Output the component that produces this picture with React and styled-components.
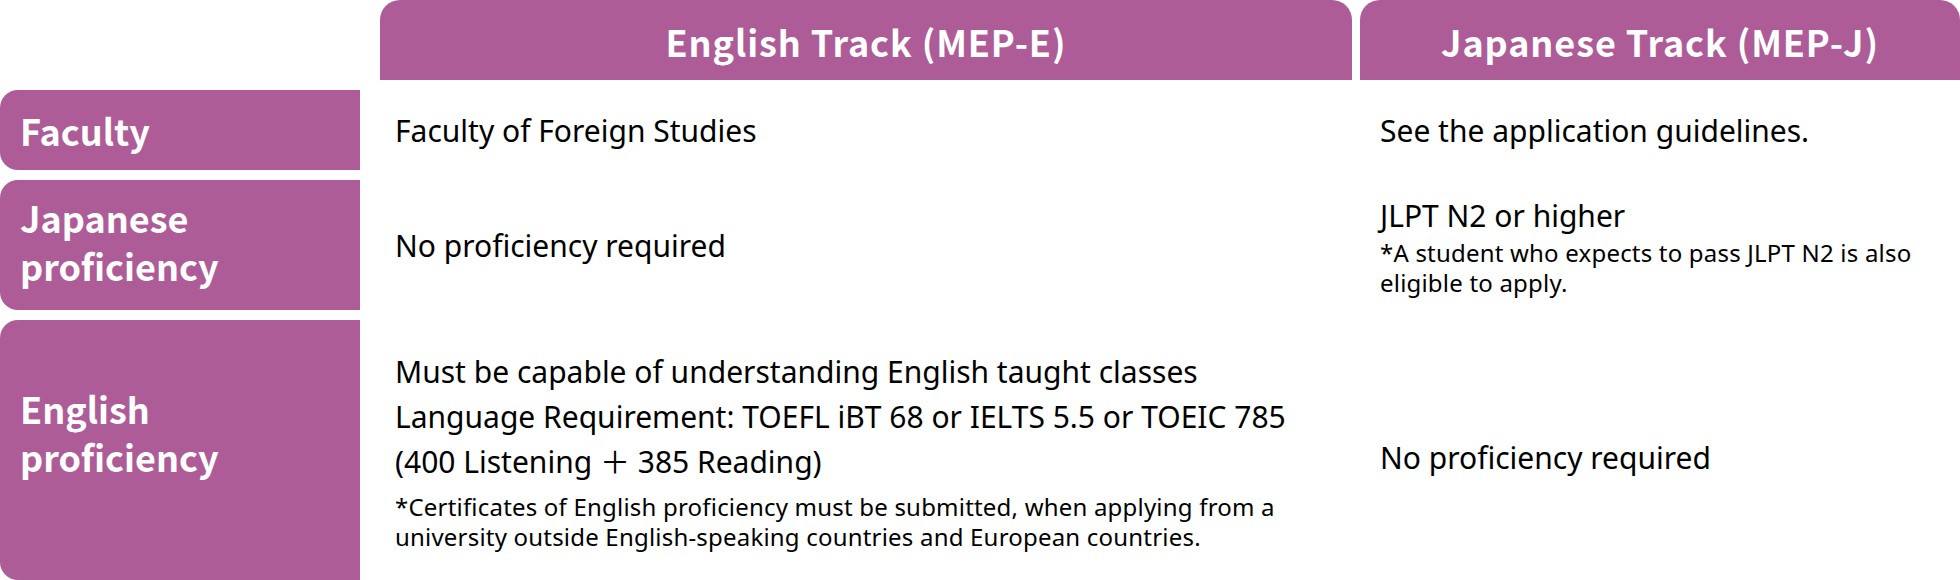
import React from "react";
import styled, { createGlobalStyle } from "styled-components";

const GlobalStyle = createGlobalStyle`
  html, body {
    margin: 0;
    padding: 0;
    background: #fff;
  }
  body {
    font-family: "Noto Sans CJK JP", "Noto Sans", sans-serif;
    color: #000;
  }
`;

const PURPLE = "#ad5c98";

const Table = styled.div`
  display: grid;
  width: 1960px;
  grid-template-columns: 372px 972px 600px;
  grid-template-rows: 80px 80px 130px 260px;
  column-gap: 8px;
  row-gap: 10px;
`;

const Corner = styled.div``;

const TrackHeader = styled.div`
  background: ${PURPLE};
  color: #fff;
  border-radius: 20px 20px 0 0;
  display: flex;
  align-items: center;
  justify-content: center;
  font-size: 36px;
  font-weight: 700;
  letter-spacing: 0.9px;
  line-height: 1;
  padding-top: 2px;
`;

const RowLabel = styled.div`
  width: 360px;
  box-sizing: border-box;
  background: ${PURPLE};
  color: #fff;
  border-radius: 18px 0 0 18px;
  display: flex;
  align-items: center;
  padding: 0 20px ${(p) => p.$lift || 0}px;
  font-size: 36px;
  font-weight: 700;
  line-height: 48px;
`;

const Cell = styled.div`
  display: flex;
  flex-direction: column;
  justify-content: center;
  padding: ${(p) => p.$drop || 0}px ${(p) => p.$right || 15}px 0
    ${(p) => p.$left || 15}px;
  font-family: "Noto Sans", "Noto Sans CJK JP", sans-serif;
  font-size: 30px;
  line-height: 45px;
`;

const Line = styled.div``;

const Note = styled.div`
  font-size: 24px;
  line-height: 30px;
  letter-spacing: 0.2px;
  margin-top: ${(p) => p.$gap || 0}px;
`;

export default function App() {
  return (
    <>
      <GlobalStyle />
      <Table>
        <Corner />
        <TrackHeader>English Track (MEP-E)</TrackHeader>
        <TrackHeader>Japanese Track (MEP-J)</TrackHeader>

        <RowLabel>Faculty</RowLabel>
        <Cell>
          <Line>Faculty of Foreign Studies</Line>
        </Cell>
        <Cell $left={20} $right={20}>
          <Line>See the application guidelines.</Line>
        </Cell>

        <RowLabel $lift={8}>
          Japanese
          <br />
          proficiency
        </RowLabel>
        <Cell>
          <Line>No proficiency required</Line>
        </Cell>
        <Cell $left={20} $right={20}>
          <Line>JLPT N2 or higher</Line>
          <Note>
            *A student who expects to pass JLPT N2 is also eligible to apply.
          </Note>
        </Cell>

        <RowLabel $lift={36}>
          English
          <br />
          proficiency
        </RowLabel>
        <Cell>
          <Line>Must be capable of understanding English taught classes</Line>
          <Line>
            Language Requirement: TOEFL iBT 68 or IELTS 5.5 or TOEIC 785
          </Line>
          <Line>(400 Listening ＋ 385 Reading)</Line>
          <Note $gap={8}>
            *Certificates of English proficiency must be submitted, when
            applying from a university outside English-speaking countries and
            European countries.
          </Note>
        </Cell>
        <Cell $left={20} $right={20} $drop={14}>
          <Line>No proficiency required</Line>
        </Cell>
      </Table>
    </>
  );
}
